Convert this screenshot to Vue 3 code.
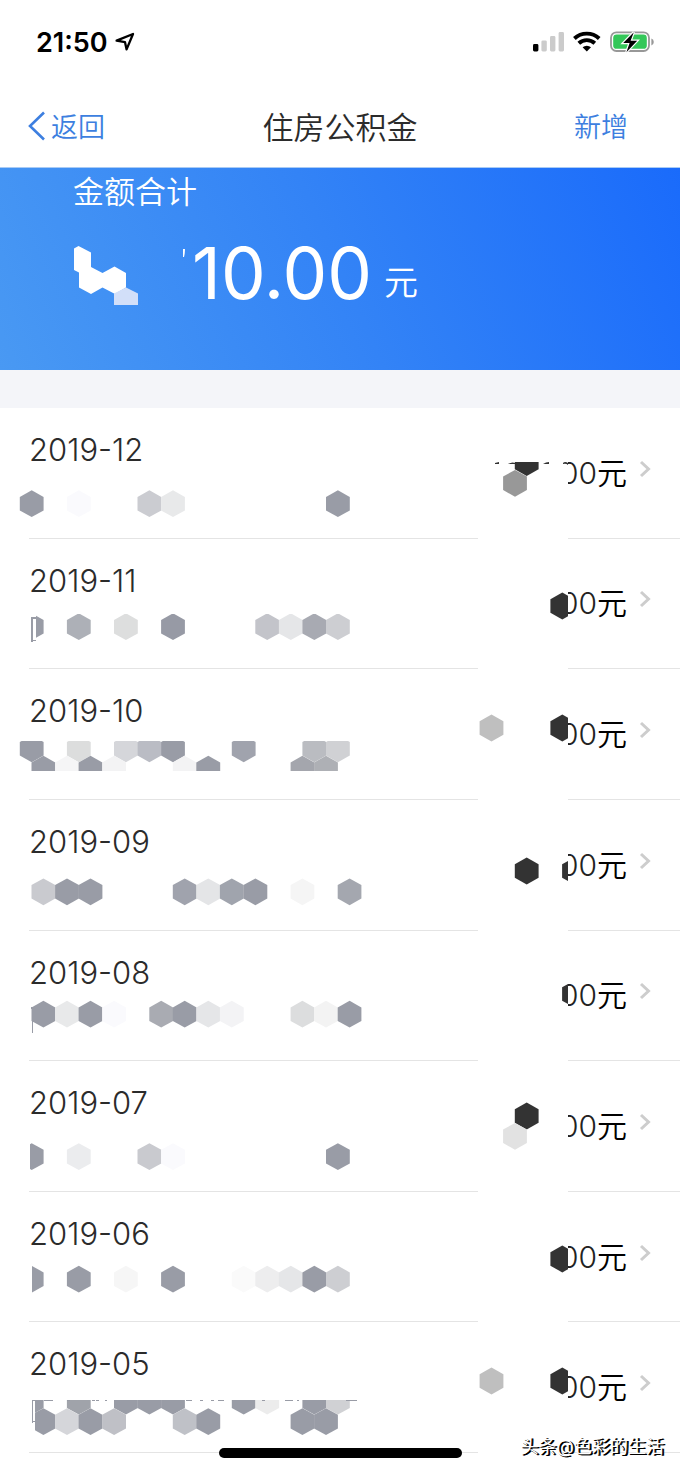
<script setup>
const COL = 23.55
const A = (k) => 31.7 + COL * k
const B = (k) => 43.4 + COL * k
const g = '#999ca6'
const d = '#333333'

const hex = (x, y) => {
  const w = 11.9
  const h = 13.4
  const s = 6.8
  return [[x, y - h], [x + w, y - s], [x + w, y + s], [x, y + h], [x - w, y + s], [x - w, y - s]]
    .map((p) => p.map((n) => n.toFixed(1)).join(','))
    .join(' ')
}
const band = (fn, y, cells) => cells.map(([k, fill]) => ({ points: hex(fn(k), y), fill }))

const records = [
  {
    month: '2019-12',
    clip: [0, 60, 131],
    left: band(A, 95.7, [[0, g], [2, '#fafafd'], [5, '#cbccd1'], [6, '#e8e9ea'], [13, g]]),
    right: [[48.7, 54.5, d], [37, 75.3, '#989898']],
    clipTop: 54,
    arcs: 'M17 55l4-1v2h-4zM30 56q5-3 9 0zM65 56q3-2 6-2v2zM85 55q2-2 5 0v2q-2-2-5-1z',
  },
  {
    month: '2019-11',
    clip: [36, 75, 125],
    left: band(A, 87.7, [[0, g], [2, '#adb0b7'], [4, '#dddede'], [6, '#979aa5'], [10, '#c3c4ca'], [11, '#e5e6e8'], [12, '#a8aab2'], [13, '#cdced2']]),
    rest: 'M31 78h5v2h-3v21h3v1h-3v1h-2z',
    right: [[84.3, 67, d]],
  },
  {
    month: '2019-10',
    clip: [0, 72, 102],
    left: [
      ...band(A, 79.8, [[0, g], [2, '#dcdddd'], [4, '#d5d6da'], [5, '#babcc4'], [6, g], [9, '#a0a3ad'], [12, '#babcc1'], [13, '#d0d1d4']]),
      ...band(B, 100.2, [[0, g], [1, '#f5f5f6'], [2, g], [3, '#f3f3f4'], [6, '#f3f3f4'], [7, g], [11, '#a4a6ad'], [12, '#aeb0b5']]),
    ],
    right: [[13.5, 59, '#bfbfbf'], [84.3, 59, d]],
  },
  {
    month: '2019-09',
    clip: [0, 60, 125],
    left: band(B, 91.8, [[0, '#c9cacf'], [1, g], [2, g], [6, '#a0a3ad'], [7, '#e4e5e7'], [8, '#a0a4ad'], [9, g], [11, '#f5f5f5'], [13, '#a4a7af']]),
    right: [[48.7, 71, d], [96, 71, d]],
  },
  {
    month: '2019-08',
    clip: [0, 60, 125],
    left: band(B, 83.2, [[0, g], [1, '#e8e9ea'], [2, g], [3, '#fafafd'], [5, '#a9abb2'], [6, g], [7, '#e5e6e8'], [8, '#f3f3f5'], [11, '#dcddde'], [12, '#f3f3f3'], [13, g]]),
    rest: 'M31 76h2v26h-1v-24h-1z',
    right: [[96, 63, d]],
  },
  {
    month: '2019-07',
    clip: [30, 60, 125],
    left: band(A, 95.6, [[0, g], [2, '#ebecee'], [5, '#c9cacf'], [6, '#fafafd'], [13, g]]),
    right: [[48.7, 55, d], [37, 75.3, '#e2e2e2']],
  },
  {
    month: '2019-06',
    clip: [32, 60, 125],
    left: band(A, 87.2, [[0, g], [2, g], [4, '#f6f6f6'], [6, g], [9, '#fafafa'], [10, '#ededee'], [11, '#e5e6e8'], [12, g], [13, '#cdced2']]),
    right: [[84.3, 67, d]],
  },
  {
    month: '2019-05',
    clip: [35, 78, 125],
    left: [
      ...band(A, 79.2, [[0, g], [2, '#a0a3aa'], [4, g], [5, g], [6, g], [9, g], [10, '#ececec'], [12, g], [13, '#d0d1d4']]),
      ...band(B, 99.6, [[0, g], [1, '#d5d6da'], [2, g], [3, '#bfc0c6'], [6, '#bfc1c7'], [7, g], [11, g], [12, g]]),
    ],
    rest: 'M32 78h4v1h-3v20h2v1h-2v1h-1zM44 78h9v1h-9zM67 78h3v1h-3zM92 78h3v1h-3zM96 78h3v1h-3zM105 78h2v1h-2zM186 78h6v1h-6zM200 78h3v1h-3zM211 78h3v1h-3zM218 78h6v1h-6zM262 78h3v1h-3zM285 78h8v1h-8zM297 78h2v1h-2zM346 78h11v1h-11z',
    right: [[13.5, 59, '#bfbfbf'], [84.3, 59, d]],
  },
]
</script>

<template>
  <div class="page">
    <header class="top">
      <div class="status">
        <span class="clock">21:50</span>
        <svg class="loc" width="20" height="20" viewBox="0 0 20 20" aria-hidden="true">
          <path d="M1.6 8.6 18 2 11.6 17.4 10 10.2z" fill="none" stroke="#000" stroke-width="2.3" stroke-linejoin="round" />
        </svg>
        <svg class="signals" width="122" height="24" viewBox="0 0 122 24" aria-hidden="true">
          <rect x="1" y="14" width="5.4" height="7.4" rx="1.4" />
          <g fill="#cbcbcb">
            <rect x="9.4" y="10.4" width="5.4" height="11" rx="1.4" />
            <rect x="18" y="6" width="5.4" height="15.4" rx="1.4" />
            <rect x="26.6" y="2" width="5.4" height="19.4" rx="1.4" />
          </g>
          <g fill="none" stroke="#000" stroke-width="3.9">
            <path d="M42.4 8.5a18.2 18.2 0 0 1 24.8 0" />
            <path d="M46.8 13.3a11.8 11.8 0 0 1 16 0" />
          </g>
          <path d="M50.6 17.3a6.4 6.4 0 0 1 8.4 0L54.8 21.5z" />
          <rect x="79" y="2.4" width="38" height="18.6" rx="5.4" fill="#fff" stroke="#989898" stroke-width="1.8" />
          <rect x="81.2" y="4.6" width="33.6" height="14.2" rx="3.4" fill="#34c759" />
          <path d="M119.4 8.4q2.4.8 2.4 3.5t-2.4 3.5z" fill="#989898" />
          <path d="M101.8 2.2 91.2 13h6.4l-3.2 9.2L105.2 10.8h-6.6z" stroke="#fff" stroke-width="2.4" />
          <path d="M101.8 2.2 91.2 13h6.4l-3.2 9.2L105.2 10.8h-6.6z" />
        </svg>
      </div>
      <nav class="nav">
        <a class="back" href="#back">
          <svg width="18" height="30" viewBox="0 0 18 30" aria-hidden="true">
            <path d="M16 1.5 2 15 16 28.5" fill="none" stroke="#3d7fe0" stroke-width="2.6" />
          </svg>
          <span>返回</span>
        </a>
        <h1>住房公积金</h1>
        <button class="add" type="button">新增</button>
      </nav>
    </header>

    <section class="hero">
      <h2>金额合计</h2>
      <p class="total">
        <svg class="mask" width="118" height="64" viewBox="0 0 118 64" aria-hidden="true">
          <path fill="#fff" d="M0 2.5 4.5 0 17 6.5V21l11.5 6 12-6.5L52 27v14.5L41 48l-12.5-6.5L17 48 5 41.5V26.5L0 24z" />
          <path fill="#d2dff9" d="M40 47.5 52 41.5 64 47.5V59H40z" />
          <path fill="#fff" d="M109 3h2q0 4-1 8h-1z" />
        </svg>
        <span class="sum">10.00</span>
        <span class="unit">元</span>
      </p>
    </section>

    <ul class="list">
      <li v-for="r in records" :key="r.month">
        <a class="row" :href="'#' + r.month">
          <span class="month">{{ r.month }}</span>
          <span class="amount">00<span class="yuan">元</span></span>
          <svg class="chev" width="12" height="18" viewBox="0 0 12 18" aria-hidden="true">
            <path d="M2 2l7.5 7-7.5 7" fill="none" stroke="#cdcdcd" stroke-width="3" />
          </svg>
        </a>
        <svg class="veil-left" width="370" height="130" viewBox="0 0 370 130" aria-hidden="true">
          <clipPath :id="'c' + r.month">
            <rect :x="r.clip[0]" :y="r.clip[1]" width="370" :height="r.clip[2] - r.clip[1]" />
          </clipPath>
          <g :clip-path="`url(#c${r.month})`">
            <polygon v-for="(c, i) in r.left" :key="i" :points="c.points" :fill="c.fill" />
          </g>
          <path v-if="r.rest" :d="r.rest" :fill="g" />
        </svg>
        <div class="veil-right">
          <svg width="90" height="130" viewBox="0 0 90 130" aria-hidden="true">
            <polygon v-for="(c, i) in r.right" :key="i" :points="hex(c[0], c[1])" :fill="c[2]" />
            <rect v-if="r.clipTop" width="90" :height="r.clipTop" fill="#fff" />
            <path v-if="r.arcs" :d="r.arcs" :fill="d" />
          </svg>
        </div>
      </li>
    </ul>

    <footer class="foot">
      <span class="home"></span>
      <span class="credit">头条@色彩的生活</span>
    </footer>
  </div>
</template>

<style>
body {
  background: #fff;
}
</style>

<style scoped>
.page {
  display: flex;
  flex-direction: column;
  min-height: 100vh;
  background: #fff;
  color: #2b2b2b;
  font-family: Inter, "Noto Sans CJK SC", sans-serif;
}
h1, h2, p, ul {
  margin: 0;
  padding: 0;
  font-weight: 350;
}
a {
  color: inherit;
  text-decoration: none;
}
.top {
  border-bottom: 1px solid #a9cbf5;
}
.status {
  display: flex;
  align-items: center;
  height: 84px;
  padding: 0 26px 0 36px;
  box-sizing: border-box;
  color: #000;
}
.clock {
  font-size: 27px;
  font-weight: 600;
}
.loc {
  margin-left: 7px;
}
.signals {
  margin-left: auto;
}
.nav {
  display: grid;
  grid-template-columns: 1fr auto 1fr;
  align-items: center;
  height: 83px;
  padding: 0 28px;
}
.back {
  display: flex;
  align-items: center;
  gap: 5px;
  color: #3d7fe0;
  font-size: 27px;
  font-weight: 350;
}
h1 {
  font-size: 31px;
}
.add {
  justify-self: end;
  margin-right: 24px;
  padding: 0;
  border: 0;
  background: none;
  color: #3d7fe0;
  font: inherit;
  font-size: 27px;
  font-weight: 350;
}
.hero {
  height: 202px;
  padding: 4px 73px 0;
  box-sizing: border-box;
  color: #fff;
  background: linear-gradient(66deg, #4999f3 0%, #3383f6 50%, #1a6bfb 100%);
}
h2 {
  font-size: 31px;
  line-height: 40px;
}
.total {
  display: flex;
  align-items: center;
  margin-top: 18px;
}
.mask {
  margin: 10px 0 0 1px;
}
.sum {
  font-size: 71px;
  font-weight: 400;
  line-height: 86px;
}
.unit {
  margin: 20px 0 0 12px;
  font-size: 34px;
  line-height: 40px;
}
.list {
  flex: 1;
  display: grid;
  grid-auto-rows: 1fr;
  border-top: 38px solid #f4f5f9;
  list-style: none;
}
li {
  position: relative;
}
.row {
  display: flex;
  align-items: center;
  height: 100%;
  box-sizing: border-box;
  margin-left: 29px;
  padding: 0 29px 4px 0;
  border-bottom: 1px solid #e4e4e4;
  font-size: 31px;
}
.month {
  align-self: flex-start;
  margin-top: 22px;
  line-height: 40px;
}
.amount {
  margin-left: auto;
  color: #222;
  font-size: 30px;
  font-weight: 300;
}
.yuan {
  color: #000;
  font-weight: 350;
}
.chev {
  margin: 0 0 4px 12px;
}
.veil-left {
  position: absolute;
  top: 0;
  left: 0;
}
.veil-right {
  position: absolute;
  top: 0;
  right: 112px;
  bottom: 0;
  width: 90px;
  background: #fff;
}
.foot {
  position: relative;
  height: 19px;
}
.home {
  position: absolute;
  left: 50%;
  bottom: 14px;
  width: 243px;
  height: 10px;
  margin-left: -121px;
  border-radius: 5px;
  background: #000;
}
.credit {
  position: absolute;
  right: 16px;
  bottom: 11px;
  color: #fff;
  font-size: 18px;
  font-weight: 400;
  line-height: 28px;
  text-shadow: 1px 1px 0 #000, 2px 1px 0 #000;
}
</style>
